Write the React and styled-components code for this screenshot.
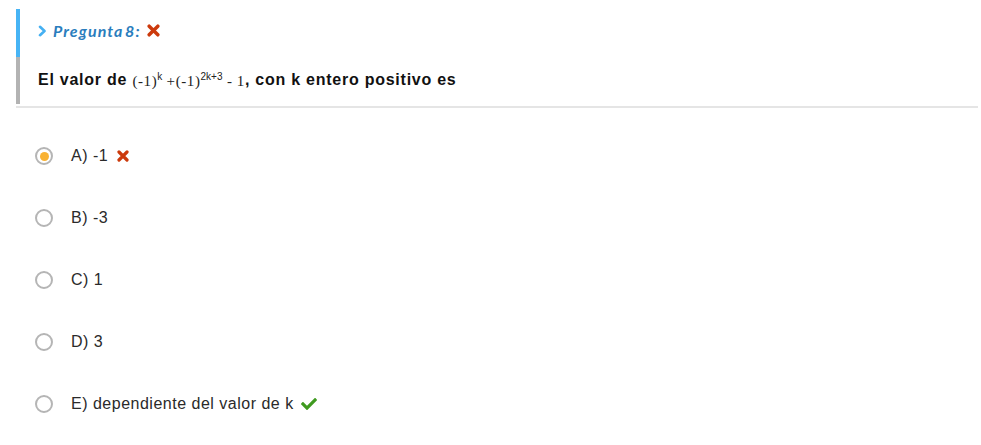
import React from 'react'
import styled, {createGlobalStyle} from 'styled-components'
import {FaCheck} from 'react-icons/fa'

const GlobalStyle = createGlobalStyle`
  html, body {
    margin: 0;
    padding: 0;
    background: #fff;
  }
  body {
    font-family: "Liberation Sans", Arial, sans-serif;
  }
`

const options = [
  {id: 'a', label: 'A) -1', selected: true, mark: 'wrong'},
  {id: 'b', label: 'B) -3'},
  {id: 'c', label: 'C) 1'},
  {id: 'd', label: 'D) 3'},
  {id: 'e', label: 'E) dependiente del valor de k', mark: 'right'},
]

const Cross = ({size = 12, className}) => (
  <svg className={className} width={size} height={size} viewBox="0 0 12 12">
    <path
      d="M2 2 L10 10 M10 2 L2 10"
      stroke="currentColor"
      strokeWidth="3.2"
      strokeLinecap="round"
      fill="none"
    />
  </svg>
)

const Arrow = ({className}) => (
  <svg className={className} width="9" height="12" viewBox="0 0 9 12">
    <path
      d="M2 1.8 L6.5 6 L2 10.2"
      stroke="currentColor"
      strokeWidth="2.6"
      strokeLinecap="round"
      strokeLinejoin="round"
      fill="none"
    />
  </svg>
)

const App = () => (
  <Page>
    <GlobalStyle />
    <Question>
      <Header>
        <Chevron />
        <Title>Pregunta 8:</Title>
        <WrongIcon size={13} />
      </Header>
      <Statement>
        El valor de{' '}
        <Formula>
          (-1)<sup>k</sup> +(-1)<sup>2k+3</sup> - 1
        </Formula>
        , con k entero positivo es
      </Statement>
    </Question>
    <Divider />
    <OptionList>
      {options.map(opt => (
        <Option key={opt.id}>
          <Radio selected={opt.selected} />
          <OptionLabel>{opt.label}</OptionLabel>
          {opt.mark === 'wrong' && <WrongIcon size={12} gap={9} />}
          {opt.mark === 'right' && <RightIcon size={16} />}
        </Option>
      ))}
    </OptionList>
  </Page>
)

const Page = styled.div`
  padding: 9px 3px 0 16px;
`

const Question = styled.div`
  display: flex;
  flex-direction: column;
`

const Header = styled.div`
  display: flex;
  align-items: center;
  height: 48px;
  box-sizing: border-box;
  border-left: 4px solid #47b4f5;
  padding: 0 0 5px 18px;
`

const Chevron = styled(Arrow)`
  color: #45b0f2;
  margin-right: 6px;
`

const Title = styled.span`
  font-family: Lato, "Open Sans", sans-serif;
  font-style: italic;
  font-weight: bold;
  font-size: 16px;
  letter-spacing: 1.1px;
  word-spacing: -3px;
  color: #2a7dbd;
  margin-right: 1px;
`

const WrongIcon = styled(Cross)`
  color: #cc3a0c;
  margin-left: ${props => props.gap || 5}px;
`

const RightIcon = styled(FaCheck)`
  color: #3f9a1f;
  margin-left: 7px;
`

const Statement = styled.div`
  display: flex;
  align-items: center;
  height: 47px;
  border-left: 4px solid #b3b3b3;
  padding-left: 18px;
  padding-bottom: 1px;
  box-sizing: border-box;
  font-size: 16px;
  font-weight: bold;
  letter-spacing: 0.75px;
  color: #111;
  white-space: pre;
`

const Formula = styled.span`
  font-family: "Liberation Serif", "Times New Roman", serif;
  font-weight: normal;
  font-size: 15px;
  letter-spacing: 0.6px;
  color: #222;
  margin-top: 3px;

  sup {
    font-size: 10px;
    vertical-align: 6px;
    line-height: 0;
    letter-spacing: 0;
    font-family: "Liberation Sans", Arial, sans-serif;
  }
`

const Divider = styled.div`
  height: 2px;
  margin-top: 2px;
  background: #e5e5e5;
`

const OptionList = styled.div`
  display: flex;
  flex-direction: column;
  padding-top: 17px;
`

const Option = styled.div`
  display: flex;
  align-items: center;
  height: 62px;
  padding-left: 19px;
`

const Radio = styled.span`
  width: 18px;
  height: 18px;
  box-sizing: border-box;
  border-radius: 50%;
  border: 2px solid #b5b5b5;
  display: flex;
  align-items: center;
  justify-content: center;
  margin-right: 18px;

  &::after {
    content: '';
    display: ${props => (props.selected ? 'block' : 'none')};
    width: 9px;
    height: 9px;
    border-radius: 50%;
    background: #f9b233;
  }
`

const OptionLabel = styled.span`
  font-size: 16px;
  letter-spacing: 0.5px;
  color: #2a2a2a;
`

export default App
